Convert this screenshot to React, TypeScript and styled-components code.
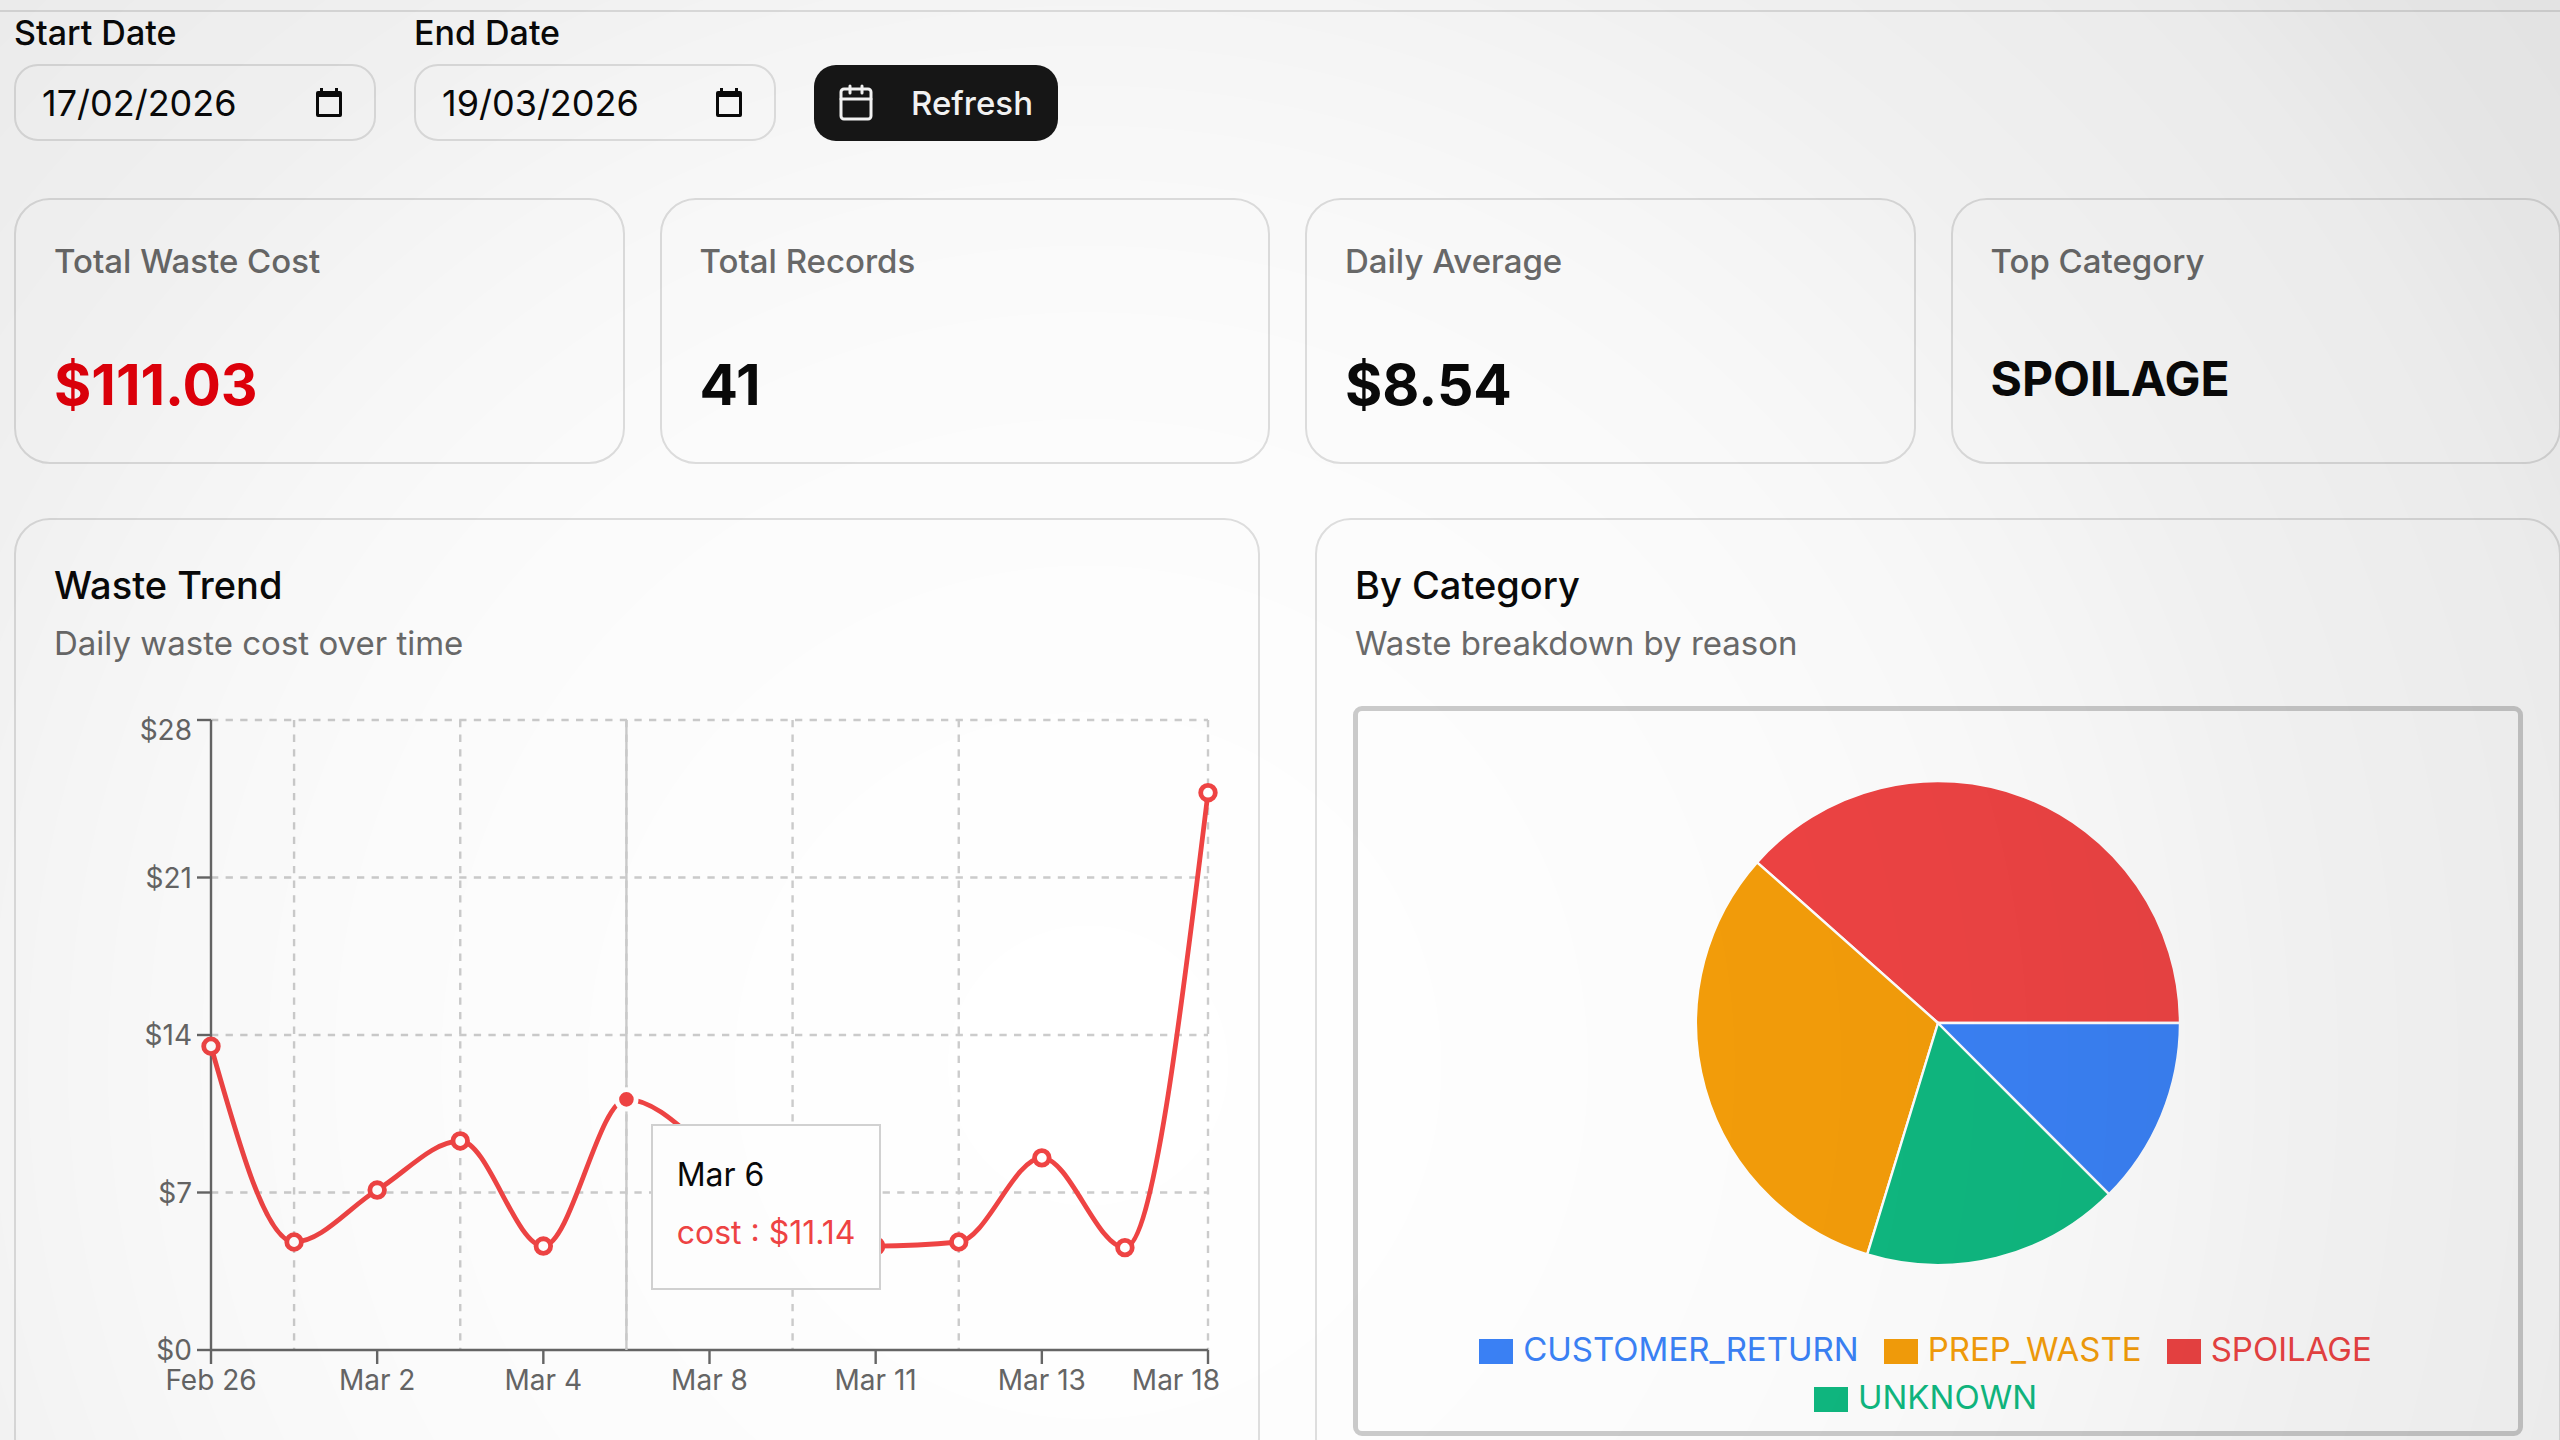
import React, { useId } from "react";
import styled, { createGlobalStyle } from "styled-components";

const font = `Inter, "Liberation Sans", sans-serif`;

const GlobalStyle = createGlobalStyle`
  *, *::before, *::after { box-sizing: border-box; }
  body {
    margin: 0;
    background: #ffffff;
    color: #0a0a0a;
    font-family: ${font};
    overflow: hidden;
  }
  h2, p, dl, dt, dd, ul { margin: 0; padding: 0; }
`;

const Page = styled.div`
  min-height: 100vh;
`;

const Shade = styled.div`
  position: fixed;
  inset: 0;
  pointer-events: none;
  background: radial-gradient(
    circle 2000px at 42.5% 74%,
    rgba(0, 0, 0, 0) 0%,
    rgba(0, 0, 0, 0.004) 14%,
    rgba(0, 0, 0, 0.016) 36%,
    rgba(0, 0, 0, 0.027) 46%,
    rgba(0, 0, 0, 0.045) 54%,
    rgba(0, 0, 0, 0.058) 61%,
    rgba(0, 0, 0, 0.08) 76%,
    rgba(0, 0, 0, 0.1) 83%,
    rgba(0, 0, 0, 0.12) 100%
  );
`;

const TopBar = styled.header`
  height: 12px;
  border-bottom: 2px solid #e2e2e2;
`;

const Content = styled.main`
  display: flex;
  flex-direction: column;
  gap: 54px;
  margin-right: -1px;
  padding-left: 14px;
`;

const Filters = styled.form`
  display: flex;
  align-items: flex-end;
  gap: 38px;
  padding-bottom: 3px;
`;

const Field = styled.div`
  display: flex;
  flex-direction: column;
  gap: 10px;
`;

const FieldLabel = styled.label`
  font-size: 34px;
  line-height: 42px;
  font-weight: 500;
`;

const DateBox = styled.div`
  display: flex;
  align-items: center;
  width: 362px;
  height: 77px;
  padding: 0 32px 0 26px;
  border: 2px solid #e2e2e2;
  border-radius: 24px;
`;

const DateInput = styled.input`
  flex: 1;
  min-width: 0;
  padding: 0;
  border: 0;
  outline: 0;
  background: transparent;
  color: #0a0a0a;
  font: 400 36px/44px ${font};
`;

const PickerButton = styled.button`
  display: flex;
  padding: 0;
  border: 0;
  background: transparent;
  color: #0a0a0a;
`;

const RefreshButton = styled.button`
  display: flex;
  align-items: center;
  justify-content: space-between;
  width: 244px;
  height: 76px;
  padding: 0 25px;
  border: 0;
  border-radius: 22px;
  background: #171717;
  color: #fafafa;
  font: 500 33px/44px ${font};
`;

const StatGrid = styled.dl`
  display: grid;
  grid-template-columns: repeat(4, 1fr);
  gap: 35px;
`;

const StatCard = styled.div`
  height: 266px;
  padding: 38px;
  border: 2px solid #e0e0e0;
  border-radius: 36px;
`;

const StatLabel = styled.dt`
  font-size: 33px;
  line-height: 46px;
  font-weight: 500;
  color: #6b6b6b;
`;

const StatValue = styled.dd<{ $tone?: string; $small?: boolean }>`
  margin-top: 67px;
  font-size: ${(p) => (p.$small ? 48 : 57)}px;
  line-height: ${(p) => (p.$small ? 56 : 68)}px;
  font-weight: 700;
  color: ${(p) => p.$tone ?? "#0a0a0a"};
`;

const PanelGrid = styled.div`
  display: grid;
  grid-template-columns: repeat(2, 1fr);
  gap: 55px;
`;

const Panel = styled.section`
  border: 2px solid #e0e0e0;
  border-radius: 36px;
  padding: 37px 38px;
`;

const PanelTitle = styled.h2`
  font-size: 38px;
  line-height: 56px;
  font-weight: 500;
`;

const PanelNote = styled.p`
  font-size: 33px;
  line-height: 48px;
  margin-top: 6px;
  margin-bottom: 39px;
  color: #6b6b6b;
`;

const ChartBox = styled.div`
  position: relative;

  svg {
    display: block;
    width: 100%;
    overflow: visible;
  }
`;

const AxisText = styled.text`
  font-family: ${font};
  font-size: 28px;
  fill: #666666;
`;

const Tooltip = styled.div`
  position: absolute;
  left: 51%;
  top: 57%;
  margin: 2px;
  padding: 20px 24px 26px;
  border: 2px solid #d2d2d2;
  background: #ffffff;
  font-size: 32px;
  line-height: 58px;
  white-space: nowrap;
`;

const TooltipValue = styled.p`
  color: #ef4444;
`;

const PieBox = styled.div`
  margin: 0 -2px;
  border: 5px solid #cccccc;
  border-radius: 9px;
  padding: 69px 0 10px;

  svg {
    display: block;
    width: 486px;
    margin: 0 auto;
  }
`;

const Legend = styled.ul`
  display: flex;
  flex-wrap: wrap;
  justify-content: center;
  max-width: 984px;
  margin: 59px auto 0;
  list-style: none;
`;

const LegendItem = styled.li<{ $color: string }>`
  display: flex;
  align-items: center;
  gap: 10px;
  margin-right: 25px;
  font-size: 33px;
  line-height: 48px;
  color: ${(p) => p.$color};

  &::before {
    content: "";
    width: 34px;
    height: 25px;
    margin-top: 5px;
    background: ${(p) => p.$color};
  }
`;

function DateField({ label, value }: { label: string; value: string }) {
  const id = useId();
  return (
    <Field>
      <FieldLabel htmlFor={id}>{label}</FieldLabel>
      <DateBox>
        <DateInput id={id} type="text" inputMode="numeric" defaultValue={value} />
        <PickerButton type="button" aria-label={`Open ${label} picker`}>
          <svg width="26" height="29" viewBox="0 0 26 29" fill="currentColor">
            <path
              fillRule="evenodd"
              d="M4 0h3v3h12V0h3v3h2a2 2 0 0 1 2 2v22a2 2 0 0 1-2 2H2a2 2 0 0 1-2-2V5a2 2 0 0 1 2-2h2zM3 9v17h20V9z"
            />
          </svg>
        </PickerButton>
      </DateBox>
    </Field>
  );
}

const PLOT = { left: 157, right: 1154, top: 14, bottom: 644, max: 28 };

const costs = [13.5, 4.8, 7.11, 9.29, 4.62, 11.14, 8.8, 4.9, 4.62, 4.8, 8.54, 4.55, 24.77];

const xTicks = [
  { index: 0, label: "Feb 26" },
  { index: 2, label: "Mar 2" },
  { index: 4, label: "Mar 4" },
  { index: 6, label: "Mar 8" },
  { index: 8, label: "Mar 11" },
  { index: 10, label: "Mar 13" },
  { index: 12, label: "Mar 18" },
];
const gridColumns = [1, 3, 5, 7, 9, 12];
const yTicks = [0, 7, 14, 21, 28];
const activeIndex = 5;

const px = (i: number) => PLOT.left + ((PLOT.right - PLOT.left) * i) / (costs.length - 1);
const py = (v: number) => PLOT.bottom - ((PLOT.bottom - PLOT.top) * v) / PLOT.max;

/* Monotone cubic interpolation, so the line never overshoots a reading. */
function monotonePath(points: [number, number][]) {
  const n = points.length;
  const slope = points.slice(1).map((p, i) => (p[1] - points[i][1]) / (p[0] - points[i][0]));
  const tangent = points.map((_, i) => {
    if (i === 0 || i === n - 1) return 0;
    const a = slope[i - 1];
    const b = slope[i];
    if (a * b <= 0) return 0;
    return Math.sign(a) * 2 * Math.min(Math.abs(a), Math.abs(b), Math.abs(a + b) / 4);
  });
  tangent[0] = (3 * slope[0] - tangent[1]) / 2;
  tangent[n - 1] = (3 * slope[n - 2] - tangent[n - 2]) / 2;
  let d = `M${points[0][0]},${points[0][1]}`;
  for (let i = 1; i < n; i++) {
    const [x0, y0] = points[i - 1];
    const [x1, y1] = points[i];
    const h = (x1 - x0) / 3;
    d += `C${x0 + h},${y0 + h * tangent[i - 1]},${x1 - h},${y1 - h * tangent[i]},${x1},${y1}`;
  }
  return d;
}

function TrendChart() {
  const points = costs.map((c, i) => [px(i), py(c)] as [number, number]);
  return (
    <ChartBox>
      <svg viewBox="0 0 1166 730" role="img" aria-label="Daily waste cost">
        <g stroke="#cccccc" strokeWidth="2.4" strokeDasharray="7.3 7.3">
          {yTicks.slice(1).map((v) => (
            <line key={v} x1={PLOT.left} x2={PLOT.right} y1={py(v)} y2={py(v)} />
          ))}
          {gridColumns.map((i) => (
            <line key={i} x1={px(i)} x2={px(i)} y1={PLOT.top} y2={PLOT.bottom} />
          ))}
        </g>
        <g stroke="#666666" strokeWidth="2.4">
          <line x1={PLOT.left} x2={PLOT.left} y1={PLOT.top} y2={PLOT.bottom} />
          <line x1={PLOT.left} x2={PLOT.right} y1={PLOT.bottom} y2={PLOT.bottom} />
          {yTicks.map((v) => (
            <line key={v} x1={PLOT.left - 14} x2={PLOT.left} y1={py(v)} y2={py(v)} />
          ))}
          {xTicks.map((t) => (
            <line key={t.index} x1={px(t.index)} x2={px(t.index)} y1={PLOT.bottom} y2={PLOT.bottom + 14} />
          ))}
        </g>
        {yTicks.map((v) => (
          <AxisText key={v} x={PLOT.left - 19} y={v === PLOT.max ? 34 : py(v) + 10} textAnchor="end">
            ${v}
          </AxisText>
        ))}
        {xTicks.map((t) => (
          <AxisText
            key={t.index}
            x={t.index === 12 ? 1166 : px(t.index)}
            y={PLOT.bottom + 40}
            textAnchor={t.index === 12 ? "end" : "middle"}
          >
            {t.label}
          </AxisText>
        ))}
        <line
          x1={px(activeIndex)}
          x2={px(activeIndex)}
          y1={PLOT.top}
          y2={PLOT.bottom}
          stroke="#cccccc"
          strokeWidth="2.4"
        />
        <path d={monotonePath(points)} fill="none" stroke="#ef4444" strokeWidth="4.8" />
        {points.map(([x, y], i) =>
          i === activeIndex ? (
            <circle key={i} cx={x} cy={y} r="9.7" fill="#ef4444" stroke="#ffffff" strokeWidth="4.8" />
          ) : (
            <circle key={i} cx={x} cy={y} r="7.3" fill="#ffffff" stroke="#ef4444" strokeWidth="4.8" />
          ),
        )}
      </svg>
      <Tooltip>
        <p>Mar 6</p>
        <TooltipValue>cost : $11.14</TooltipValue>
      </Tooltip>
    </ChartBox>
  );
}

const slices = [
  { name: "SPOILAGE", color: "#ef4444", from: 0, to: 138.4 },
  { name: "PREP_WASTE", color: "#f59e0b", from: 138.4, to: 253 },
  { name: "UNKNOWN", color: "#10b981", from: 253, to: 315 },
  { name: "CUSTOMER_RETURN", color: "#3b82f6", from: 315, to: 360 },
];

const legendOrder = ["CUSTOMER_RETURN", "PREP_WASTE", "SPOILAGE", "UNKNOWN"];

function slicePath(from: number, to: number) {
  const at = (deg: number) => {
    const a = (deg * Math.PI) / 180;
    return `${243 + 242 * Math.cos(a)},${243 - 242 * Math.sin(a)}`;
  };
  return `M243,243L${at(from)}A242,242,0,0,0,${at(to)}Z`;
}

function CategoryChart() {
  return (
    <PieBox>
      <svg viewBox="0 0 486 486" role="img" aria-label="Waste by category">
        {slices.map((s) => (
          <path key={s.name} d={slicePath(s.from, s.to)} fill={s.color} stroke="#ffffff" strokeWidth="2.4" />
        ))}
      </svg>
      <Legend>
        {legendOrder.map((name) => (
          <LegendItem key={name} $color={slices.find((s) => s.name === name)!.color}>
            {name}
          </LegendItem>
        ))}
      </Legend>
    </PieBox>
  );
}

export default function App() {
  return (
    <Page>
      <GlobalStyle />
      <TopBar />
      <Content>
        <Filters onSubmit={(e) => e.preventDefault()}>
          <DateField label="Start Date" value="17/02/2026" />
          <DateField label="End Date" value="19/03/2026" />
          <RefreshButton type="submit">
            <svg
              width="34"
              height="38"
              viewBox="0 0 34 38"
              fill="none"
              stroke="currentColor"
              strokeWidth="3"
              strokeLinecap="round"
              strokeLinejoin="round"
            >
              <rect x="2" y="5" width="30" height="30" rx="3" />
              <path d="M11 2v7M23 2v7M2 15h30" />
            </svg>
            Refresh
          </RefreshButton>
        </Filters>
        <StatGrid>
          <StatCard>
            <StatLabel>Total Waste Cost</StatLabel>
            <StatValue $tone="#e7000b">$111.03</StatValue>
          </StatCard>
          <StatCard>
            <StatLabel>Total Records</StatLabel>
            <StatValue>41</StatValue>
          </StatCard>
          <StatCard>
            <StatLabel>Daily Average</StatLabel>
            <StatValue>$8.54</StatValue>
          </StatCard>
          <StatCard>
            <StatLabel>Top Category</StatLabel>
            <StatValue $small>SPOILAGE</StatValue>
          </StatCard>
        </StatGrid>
        <PanelGrid>
          <Panel>
            <PanelTitle>Waste Trend</PanelTitle>
            <PanelNote>Daily waste cost over time</PanelNote>
            <TrendChart />
          </Panel>
          <Panel>
            <PanelTitle>By Category</PanelTitle>
            <PanelNote>Waste breakdown by reason</PanelNote>
            <CategoryChart />
          </Panel>
        </PanelGrid>
      </Content>
      <Shade />
    </Page>
  );
}
